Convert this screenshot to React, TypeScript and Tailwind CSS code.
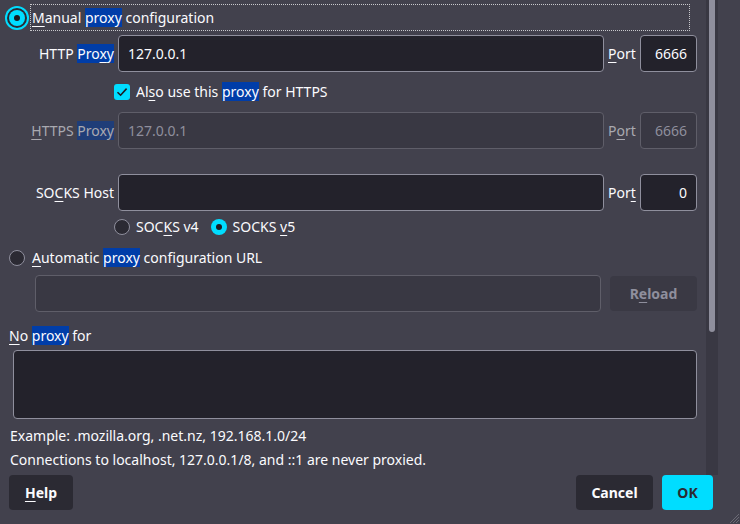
import React from "react";

const Hl = ({ children, dim }: { children: React.ReactNode; dim?: boolean }) => (
  <span className={dim ? "bg-[#1f3d78]" : "bg-[#003da8]"}>{children}</span>
);

const U = ({ children }: { children: React.ReactNode }) => <span className="underline underline-offset-[3px] decoration-1">{children}</span>;

const RadioOn = ({ focus }: { focus?: boolean }) => (
  <span
    className={
      "w-4 h-4 rounded-full bg-[#00ddff] flex items-center justify-center shrink-0 " +
      (focus ? "shadow-[0_0_0_2px_#2b2a33,0_0_0_4px_#00ddff]" : "")
    }
  >
    <span className="w-[6px] h-[6px] rounded-full bg-[#1c1b22]" />
  </span>
);

const RadioOff = () => (
  <span className="w-4 h-4 rounded-full bg-[#2b2a33] border border-[#8f8f9d] shrink-0" />
);

const Input = ({ value, disabled, right, className }: { value?: string; disabled?: boolean; right?: boolean; className?: string }) => (
  <div
    className={
      "h-[37px] rounded-[4px] border flex items-center px-[9px] " +
      (disabled ? "bg-[#393843] border-[#5f5e69] text-[#8f8f9d] " : "bg-[#23222b] border-[#8f8f9d] text-[#fbfbfe] ") +
      (right ? "justify-end " : "") +
      (className || "")
    }
  >
    {value}
  </div>
);

export default function App() {
  return (
    <div className="w-[740px] h-[524px] bg-[#42414d] text-[#fbfbfe] text-[14px] leading-[20px] font-['Noto_Sans',sans-serif] overflow-hidden relative flex flex-col">
      <div className="flex h-[475px]">
        <div className="w-[706px] flex flex-col">
          {/* Manual */}
          <div className="mt-[4px] h-[27px] flex items-center">
            <div className="w-[30px] flex justify-center pl-[4px]">
              <RadioOn focus />
            </div>
            <div className="w-[660px] h-[27px] border border-dotted border-[#c8c8cc] flex items-center pl-[1px]">
              <span>
                <U>M</U>anual <Hl>proxy</Hl> configuration
              </span>
            </div>
          </div>

          <div className="mt-[4px] grid grid-cols-[114px_486px_28px_57px] gap-x-[4px] items-center">
            <div className="text-right whitespace-nowrap">
              HTTP <Hl>Pro<U>x</U>y</Hl>
            </div>
            <Input value="127.0.0.1" />
            <div className="whitespace-nowrap">
              <U>P</U>ort
            </div>
            <Input value="6666" right />

            <div />
            <div className="h-[40px] col-span-3 flex items-center gap-[6px] -ml-[4px]">
              <span className="w-4 h-4 rounded-[3px] bg-[#00ddff] flex items-center justify-center">
                <svg width="14" height="14" viewBox="0 0 14 14">
                  <path d="M2.5 7.2 L5.6 10.2 L11.6 3.6" fill="none" stroke="#1c1b22" strokeWidth="1.6" />
                </svg>
              </span>
              <span>
                Al<U>s</U>o use this <Hl>proxy</Hl> for HTTPS
              </span>
            </div>

            <div className="text-right whitespace-nowrap text-[#a9a9b0]">
              <U>H</U>TTPS <Hl dim>Proxy</Hl>
            </div>
            <Input value="127.0.0.1" disabled />
            <div className="whitespace-nowrap text-[#a9a9b0]">
              P<U>o</U>rt
            </div>
            <Input value="6666" right disabled />

            <div className="h-[25px] col-span-4" />

            <div className="text-right whitespace-nowrap">
              SO<U>C</U>KS Host
            </div>
            <Input />
            <div className="whitespace-nowrap">
              Por<U>t</U>
            </div>
            <Input value="0" right />

            <div />
            <div className="h-[32px] col-span-3 flex items-center -ml-[4px]">
              <RadioOff />
              <span className="ml-[6px]">
                SOC<U>K</U>S v4
              </span>
              <span className="ml-[12px]">
                <RadioOn />
              </span>
              <span className="ml-[6px]">
                SOCKS <U>v</U>5
              </span>
            </div>
          </div>

          {/* Automatic */}
          <div className="h-[30px] flex items-center pl-[9px]">
            <RadioOff />
            <span className="ml-[7px]">
              <U>A</U>utomatic <Hl>proxy</Hl> configuration URL
            </span>
          </div>
          <div className="mt-[2px] flex items-center pl-[35px]">
            <Input disabled className="w-[566px]" />
            <div className="ml-[9px] w-[87px] h-[35px] rounded-[4px] bg-[#3a3944] text-[#8f8f9d] font-bold flex items-center justify-center">
              R<U>e</U>load
            </div>
          </div>

          <div className="mt-[12px] h-[24px] flex items-center pl-[9px]">
            <span>
              <U>N</U>o <Hl>proxy</Hl> for
            </span>
          </div>
          <div className="mt-[2px] ml-[13px] w-[684px] h-[69px] rounded-[4px] border border-[#8f8f9d] bg-[#23222b]" />
          <div className="mt-[5px] h-[24px] flex items-center pl-[10px]">Example: .mozilla.org, .net.nz, 192.168.1.0/24</div>
          <div className="h-[24px] flex items-center pl-[10px]">Connections to localhost, 127.0.0.1/8, and ::1 are never proxied.</div>
        </div>
        <div className="w-[12px] h-[475px] bg-[#393843] flex justify-center">
          <div className="w-[6px] h-[332px] rounded-b-full bg-[#8f8f9d]" />
        </div>
      </div>

      <div className="flex items-start pl-[9px] pr-[27px] h-[49px]">
        <div className="w-[64px] h-[35px] rounded-[4px] bg-[#2b2a33] font-bold flex items-center justify-center">
          <U>H</U>elp
        </div>
        <div className="flex-1" />
        <div className="w-[77px] h-[35px] rounded-[4px] bg-[#2b2a33] font-bold flex items-center justify-center">Cancel</div>
        <div className="ml-[9px] w-[51px] h-[35px] rounded-[4px] bg-[#00ddff] text-[#2b2a33] font-bold flex items-center justify-center">OK</div>
      </div>

      <svg className="absolute right-0 bottom-0" width="14" height="14" viewBox="0 0 14 14">
        <path d="M13 4 L4 13 M13 7 L7 13 M13 10 L10 13" stroke="#6b6a75" strokeWidth="1" />
      </svg>
    </div>
  );
}
